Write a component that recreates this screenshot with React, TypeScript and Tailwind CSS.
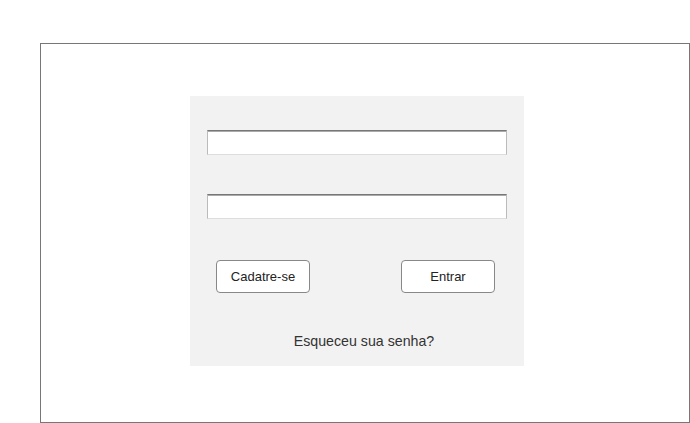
export default function App() {
  return (
    <div
      className="w-[690px] h-[423px] bg-white pt-[43px] pl-[40px]"
      style={{ fontFamily: '"Liberation Sans", Arial, sans-serif' }}
    >
      <div className="w-[650px] h-[380px] border border-[#777] pl-[149px] pt-[52px]">
        <div className="w-[334px] h-[270px] bg-[#f2f2f2] flex flex-col pt-[34px] px-[17px]">
          <input className="h-[25px] w-[300px] bg-white border border-[#bbb] border-t-[#777] border-b-[#ddd] shadow-[inset_0_1px_0_#aaa] outline-none" />
          <input className="mt-[39px] h-[25px] w-[300px] bg-white border border-[#bbb] border-t-[#777] border-b-[#ddd] shadow-[inset_0_1px_0_#aaa] outline-none" />
          <div className="mt-[41px] flex justify-between pl-[9px] pr-[12px]">
            <button className="w-[94px] h-[33px] rounded-[4px] border border-[#888] bg-white text-[13px] text-[#222]">
              Cadatre-se
            </button>
            <button className="w-[94px] h-[33px] rounded-[4px] border border-[#888] bg-white text-[13px] text-[#222]">
              Entrar
            </button>
          </div>
          <div className="mt-[39px] pl-[14px] text-center text-[14.2px] leading-[18px] text-[#333]">
            Esqueceu sua senha?
          </div>
        </div>
      </div>
    </div>
  );
}
